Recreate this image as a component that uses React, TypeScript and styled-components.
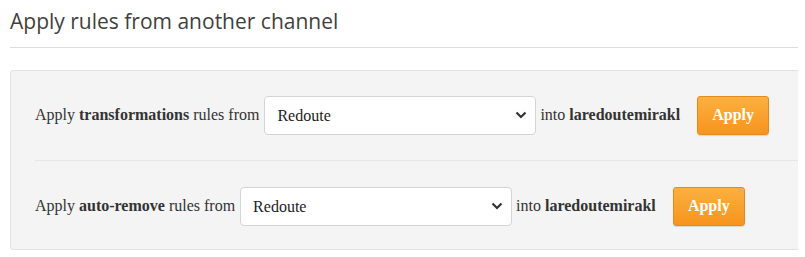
import React from 'react';
import styled, { createGlobalStyle } from 'styled-components';

const GlobalStyle = createGlobalStyle`
    body {
        margin: 0;
        background: #ffffff;
        font-family: "Liberation Serif", "Times New Roman", serif;
    }
`;

const Page = styled.div`
    padding: 0 7px 0 10px;
`;

const Title = styled.h2`
    margin: 0;
    padding-top: 7px;
    height: 48px;
    font-family: "Open Sans", "Noto Sans", sans-serif;
    font-weight: 400;
    font-size: 21px;
    color: #3f3f3f;
    border-bottom: 1px solid #dcdcdc;
    box-sizing: border-box;
    line-height: 28px;
`;

const Panel = styled.div`
    margin-top: 22px;
    background: #f4f4f4;
    border: 1px solid #e2e2e2;
    border-right: none;
    border-radius: 4px 0 0 4px;
    padding: 24px 0 23px 24px;
`;

const RuleRow = styled.div`
    display: flex;
    align-items: center;
    height: 40px;
    font-size: 16px;
    color: #333;
`;

const Label = styled.span`
    margin-right: 5px;
    b {
        font-weight: 700;
    }
`;

const Select = styled.select`
    width: 272px;
    height: 39px;
    border: 1px solid #d4d4d4;
    border-radius: 4px;
    background: #ffffff;
    font-family: "Liberation Serif", "Times New Roman", serif;
    font-size: 16px;
    color: #222;
    padding: 0 10px 0 12px;
    appearance: none;
    background-image: url("data:image/svg+xml,%3Csvg xmlns='http://www.w3.org/2000/svg' width='12' height='8' viewBox='0 0 12 8'%3E%3Cpath d='M1.5 1.5 L6 6 L10.5 1.5' fill='none' stroke='%23333' stroke-width='2.2'/%3E%3C/svg%3E");
    background-repeat: no-repeat;
    background-position: right 8px center;
`;

const Into = styled.span`
    margin-left: 4px;
`;

const ApplyButton = styled.button`
    margin-left: 17px;
    width: 72px;
    height: 39px;
    border: 1px solid #e8891a;
    border-radius: 3px;
    background: linear-gradient(#fbb040, #f7941d);
    color: #ffffff;
    font-family: "Liberation Serif", "Times New Roman", serif;
    font-weight: 700;
    font-size: 16px;
    box-shadow: 0 1px 1px rgba(0, 0, 0, 0.12);
`;

const Divider = styled.div`
    height: 1px;
    background: #e6e6e6;
    margin: 25px 0 25px 0;
`;

const rules = [
    { kind: 'transformations' },
    { kind: 'auto-remove' },
];

const App = () => {
    return (
        <Page>
            <GlobalStyle />
            <Title>Apply rules from another channel</Title>
            <Panel>
                {rules.map((rule, dex) => (
                    <React.Fragment key={dex}>
                        {dex > 0 && <Divider />}
                        <RuleRow>
                            <Label>Apply <b>{rule.kind}</b> rules from</Label>
                            <Select defaultValue="Redoute">
                                <option>Redoute</option>
                            </Select>
                            <Into>into <b>laredoutemirakl</b></Into>
                            <ApplyButton>Apply</ApplyButton>
                        </RuleRow>
                    </React.Fragment>
                ))}
            </Panel>
        </Page>
    );
};

export default App;
